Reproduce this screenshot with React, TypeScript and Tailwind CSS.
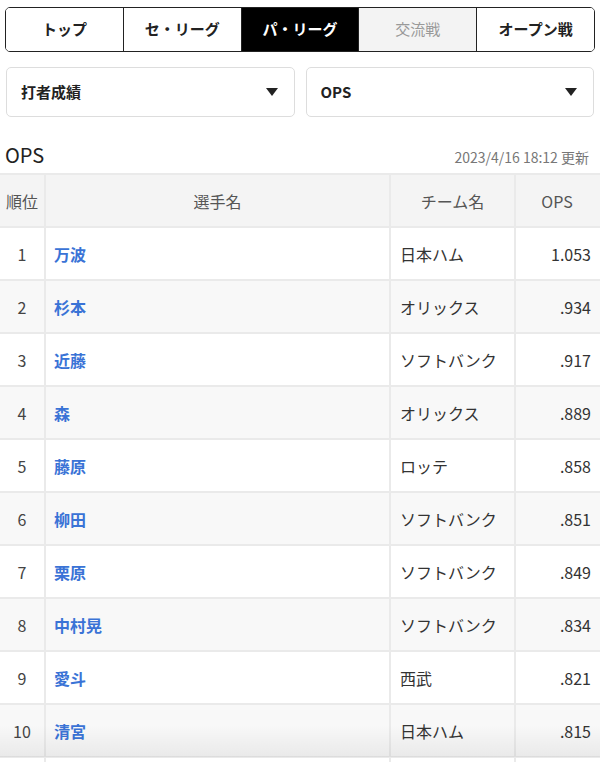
import React from "react";

const rows: [number, string, string, string][] = [
  [1, "万波", "日本ハム", "1.053"],
  [2, "杉本", "オリックス", ".934"],
  [3, "近藤", "ソフトバンク", ".917"],
  [4, "森", "オリックス", ".889"],
  [5, "藤原", "ロッテ", ".858"],
  [6, "柳田", "ソフトバンク", ".851"],
  [7, "栗原", "ソフトバンク", ".849"],
  [8, "中村晃", "ソフトバンク", ".834"],
  [9, "愛斗", "西武", ".821"],
  [10, "清宮", "日本ハム", ".815"],
];

const tabs = ["トップ", "セ・リーグ", "パ・リーグ", "交流戦", "オープン戦"];

function Caret() {
  return (
    <svg width="12" height="8" viewBox="0 0 12 8">
      <path d="M0 0 L12 0 L6 8 Z" fill="#222" />
    </svg>
  );
}

export default function App() {
  return (
    <div
      className="relative w-[600px] h-[762px] overflow-hidden bg-white text-[#222]"
      style={{ fontFamily: '"Noto Sans CJK JP", "Noto Sans", sans-serif' }}
    >
      <div className="px-[5px] pt-[7px]">
        <div className="flex h-[45px] border-[1.5px] border-[#222] rounded-[5px] overflow-hidden">
          {tabs.map((t, i) => {
            const active = i === 2;
            const disabled = i === 3;
            return (
              <div
                key={t}
                className={
                  "flex-1 flex items-center justify-center text-[15px] " +
                  (i < 4 ? "border-r-[1.5px] border-[#222] " : "") +
                  (active
                    ? "bg-black text-white font-bold"
                    : disabled
                    ? "bg-[#f3f3f3] text-[#999]"
                    : "bg-white text-[#222] font-bold")
                }
              >
                {t}
              </div>
            );
          })}
        </div>
      </div>

      <div className="flex gap-[11px] px-[6px] mt-[15px]">
        <div className="flex-1 h-[50px] border border-[#ddd] rounded-[5px] flex items-center justify-between pl-[14px] pr-[16px]">
          <span className="text-[15px] font-bold">打者成績</span>
          <Caret />
        </div>
        <div className="flex-1 h-[50px] border border-[#ddd] rounded-[5px] flex items-center justify-between pl-[14px] pr-[16px]">
          <span className="text-[15px] font-bold">OPS</span>
          <Caret />
        </div>
      </div>

      <div className="flex items-end justify-between px-[5px] mt-[21px] h-[30px]">
        <span className="text-[20px] leading-[26px] text-[#222]">OPS</span>
        <span className="text-[14px] leading-[22px] text-[#777] pr-[6px]">2023/4/16 18:12 更新</span>
      </div>

      <div className="mt-[5px] border-t-2 border-[#eaeaea] text-[16px]">
        <div className="grid grid-cols-[46px_345px_125px_84px] h-[53px] bg-[#f4f4f4] border-b-2 border-[#eaeaea] text-[#555]">
          <div className="flex items-center justify-center border-r-2 border-[#eaeaea]">順位</div>
          <div className="flex items-center justify-center border-r-2 border-[#eaeaea]">選手名</div>
          <div className="flex items-center justify-center border-r-2 border-[#eaeaea]">チーム名</div>
          <div className="flex items-center justify-center pr-[2px]">OPS</div>
        </div>
        {rows.map(([rank, name, team, ops]) => (
          <div
            key={rank}
            className={
              "grid grid-cols-[46px_345px_125px_84px] h-[53px] border-b-2 border-[#eaeaea] " +
              (rank % 2 === 0 ? "bg-[#f8f8f8]" : "bg-white")
            }
          >
            <div className="flex items-center justify-center border-r-2 border-[#eaeaea] text-[#444]">{rank}</div>
            <div className="flex items-center pl-[8px] border-r-2 border-[#eaeaea] text-[#3a73d6] font-bold">{name}</div>
            <div className="flex items-center pl-[9px] border-r-2 border-[#eaeaea] text-[#333]">{team}</div>
            <div className="flex items-center justify-end pr-[9px] text-[#333]">{ops}</div>
          </div>
        ))}
        <div className="grid grid-cols-[46px_345px_125px_84px] h-[53px] bg-white">
          <div className="border-r-2 border-[#eaeaea]" />
          <div className="border-r-2 border-[#eaeaea]" />
          <div className="border-r-2 border-[#eaeaea]" />
          <div />
        </div>
      </div>

      <div className="absolute left-0 right-0 bottom-[5px] h-[32px] bg-gradient-to-b from-transparent to-black/[0.06] pointer-events-none" />
    </div>
  );
}
